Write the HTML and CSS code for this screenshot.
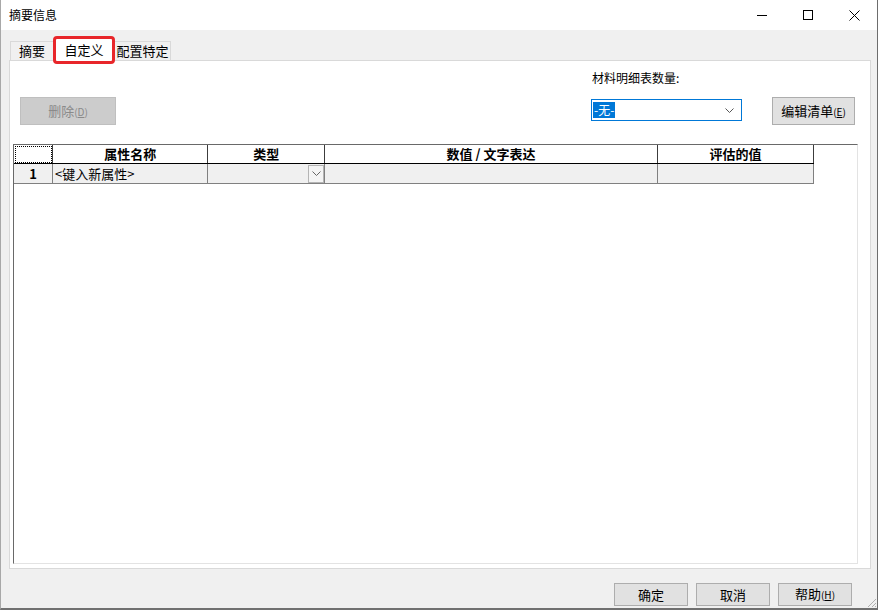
FILE: index.html
```html
<!DOCTYPE html>
<html lang="zh-CN">
<head>
  <meta charset="UTF-8">
  <title>摘要信息</title>
  <link rel="stylesheet" href="styles.css">
</head>
<body>
  <div class="window">
    <div class="titlebar">
      <span class="title">摘要信息</span>
      <div class="caption">
        <span class="capBtn">
          <svg width="10" height="10" viewBox="0 0 10 10"><line x1="0" y1="5.5" x2="10" y2="5.5" stroke="#000" stroke-width="1"/></svg>
        </span>
        <span class="capBtn">
          <svg width="10" height="10" viewBox="0 0 10 10"><rect x="0.5" y="0.5" width="9" height="9" fill="none" stroke="#000" stroke-width="1"/></svg>
        </span>
        <span class="capBtn">
          <svg width="11" height="11" viewBox="0 0 11 11"><path d="M0.5 0.5 L10.5 10.5 M10.5 0.5 L0.5 10.5" stroke="#000" stroke-width="1"/></svg>
        </span>
      </div>
    </div>

    <div class="client">
      <div class="tabs">
        <span class="tab tabSummary">摘要</span>
        <span class="tab tabActive">自定义</span>
        <span class="tab tabConfig">配置特定</span>
      </div>

      <div class="panel">
        <div class="toolbar">
          <button class="btn btnDisabled btnDelete">删除<span class="accel">(<u>D</u>)</span></button>
          <div class="bom">
            <div class="bomField">
              <div class="bomLabel">材料明细表数量:</div>
              <div class="select">
                <span class="selText">-无-</span>
                <svg class="selArrow" width="9" height="5" viewBox="0 0 9 5"><path d="M0.5 0.5 L4.5 4.5 L8.5 0.5" fill="none" stroke="#555" stroke-width="1"/></svg>
              </div>
            </div>
            <button class="btn btnEdit">编辑清单<span class="accel">(<u>E</u>)</span></button>
          </div>
        </div>

        <div class="grid">
          <table class="propTable">
            <tr class="headRow">
              <th class="colNum focusCell"></th>
              <th class="colName">属性名称</th>
              <th class="colType">类型</th>
              <th class="colValue">数值 / 文字表达</th>
              <th class="colEval">评估的值</th>
            </tr>
            <tr class="dataRow">
              <td class="rowNum">1</td>
              <td class="nameCell">&lt;键入新属性&gt;</td>
              <td class="typeCell">
                <div class="typeWrap">
                  <span class="dropBtn">
                    <svg width="9" height="5" viewBox="0 0 9 5"><path d="M0.5 0.5 L4.5 4.5 L8.5 0.5" fill="none" stroke="#666" stroke-width="1"/></svg>
                  </span>
                </div>
              </td>
              <td></td>
              <td></td>
            </tr>
          </table>
        </div>
      </div>
    </div>

    <div class="footer">
      <button class="btn btnFoot">确定</button>
      <button class="btn btnFoot">取消</button>
      <button class="btn btnFoot">帮助<span class="accel">(<u>H</u>)</span></button>
      <svg class="grip" width="12" height="12" viewBox="0 0 12 12">
        <path d="M11 3 L3 11 M11 7 L7 11 M11 10 L10 11" stroke="#b0b0b0" stroke-width="1"/>
      </svg>
    </div>
  </div>
</body>
</html>
```

FILE: styles.css
```css
body{
  margin: 0;
  width: 878px;
  height: 610px;
  overflow: hidden;
  background-color: #f0f0f0;
  font-family: "Noto Sans CJK SC", "Noto Sans", sans-serif;
  font-size: 13px;
  color: #000000;
}
.window{
  box-sizing: border-box;
  width: 878px;
  height: 610px;
  display: flex;
  flex-direction: column;
  border-left: 1px solid #a8a8a8;
  border-right: 1px solid #6d6d6d;
  border-bottom: 2px solid #707070;
  position: relative;
}

/* title bar */
.titlebar{
  height: 30px;
  background-color: #ffffff;
  display: flex;
  align-items: center;
  justify-content: space-between;
}
.title{
  padding-left: 8px;
  font-size: 12px;
  line-height: 30px;
}
.caption{
  display: flex;
  height: 30px;
}
.capBtn{
  width: 46px;
  height: 30px;
  display: flex;
  align-items: center;
  justify-content: center;
}

/* tabs + panel */
.client{
  flex: 1;
  display: flex;
  flex-direction: column;
  padding: 0 6px 0 8px;
}
.tabs{
  height: 30px;
  display: flex;
  align-items: flex-end;
  padding-left: 1px;
}
.tab{
  box-sizing: border-box;
  height: 19px;
  line-height: 18px;
  text-align: center;
  background-color: #f0f0f0;
  border: 1px solid #d9d9d9;
  border-bottom: none;
}
.tabSummary{
  width: 44px;
}
.tabActive{
  width: 60px;
  height: 24px;
  line-height: 24px;
  margin-bottom: -1px;
  background-color: #ffffff;
  position: relative;
  z-index: 1;
}
.tabActive::after{
  content: "";
  position: absolute;
  left: -2px;
  right: -2px;
  top: -2px;
  bottom: -3px;
  border: 3px solid #e8262a;
  border-radius: 4px;
}
.tabConfig{
  width: 57px;
}
.panel{
  flex: 1;
  display: flex;
  flex-direction: column;
  background-color: #ffffff;
  border: 1px solid #d9d9d9;
}

/* toolbar */
.toolbar{
  height: 83px;
  display: flex;
  justify-content: space-between;
  align-items: flex-start;
  padding: 0 15px 0 10px;
}
.btn{
  box-sizing: border-box;
  font-family: "Noto Sans CJK SC", "Noto Sans", sans-serif;
  font-size: 13px;
  color: #000000;
  background-color: #e1e1e1;
  border: 1px solid #adadad;
  padding: 0;
  line-height: 20px;
}
.accel{
  font-size: 10px;
}
.btnDelete{
  width: 96px;
  height: 28px;
  margin-top: 36px;
}
.btnDisabled{
  background-color: #cccccc;
  border-color: #bfbfbf;
  color: #8a8a8a;
}
.bom{
  display: flex;
  align-items: flex-start;
}
.bomField{
  padding-top: 8px;
  width: 151px;
}
.bomLabel{
  font-size: 12px;
  line-height: 18px;
  padding-left: 1px;
}
.select{
  box-sizing: border-box;
  margin-top: 12px;
  height: 22px;
  border: 1px solid #0078d7;
  display: flex;
  align-items: center;
  justify-content: space-between;
  padding: 0 7px 0 1px;
}
.selText{
  background-color: #0078d7;
  color: #ffffff;
  font-size: 12px;
  line-height: 16px;
  padding: 0 1px;
}
.btnEdit{
  width: 83px;
  height: 28px;
  margin-top: 36px;
  margin-left: 30px;
}

/* property grid */
.grid{
  flex: 1;
  margin: 0 12px 4px 3px;
  border-top: 1px solid #696969;
  border-left: 1px solid #696969;
  border-right: 1px solid #e3e3e3;
  border-bottom: 1px solid #e3e3e3;
  background-color: #ffffff;
}
.propTable{
  border-collapse: collapse;
  table-layout: fixed;
  width: 800px;
}
.propTable th,
.propTable td{
  padding: 0 2px;
  font-size: 13px;
  white-space: nowrap;
  overflow: hidden;
}
.headRow th{
  height: 18px;
  line-height: 18px;
  font-weight: bold;
  text-align: center;
  background-color: #ffffff;
  border-right: 1px solid #3c3c3c;
  border-bottom: 1px solid #000000;
}
.focusCell{
  outline: 1px dotted #000000;
  outline-offset: -2px;
}
.colNum{ width: 34px; }
.colName{ width: 150px; }
.colType{ width: 112px; }
.colValue{ width: 327px; }
.colEval{ width: 151px; }
.dataRow td{
  height: 19px;
  line-height: 19px;
  background-color: #f0f0f0;
  border-right: 1px solid #808080;
  border-bottom: 1px solid #808080;
}
.rowNum{
  text-align: center;
  font-weight: bold;
  font-size: 11px;
}
.typeCell{
  padding: 0 !important;
}
.typeWrap{
  display: flex;
  justify-content: flex-end;
  align-items: center;
  height: 19px;
}
.dropBtn{
  box-sizing: border-box;
  width: 16px;
  height: 18px;
  border: 1px solid #b4b4b4;
  background-color: #f4f4f4;
  display: flex;
  align-items: center;
  justify-content: center;
}

/* footer */
.footer{
  height: 39px;
  display: flex;
  justify-content: flex-end;
  align-items: flex-start;
  gap: 8px;
  padding-right: 25px;
}
.btnFoot{
  width: 74px;
  height: 23px;
  margin-top: 14px;
}
.grip{
  position: absolute;
  right: 0;
  bottom: 0;
}
```
